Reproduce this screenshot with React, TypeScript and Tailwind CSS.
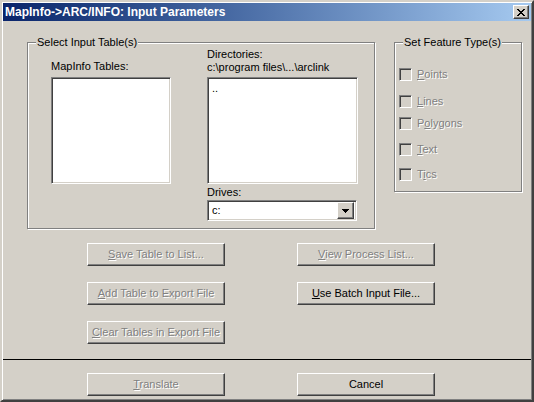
import React from "react";

const raised =
  "border border-t-white border-l-white border-r-[#404040] border-b-[#404040] [box-shadow:inset_-1px_-1px_0_#808080]";
const sunken =
  "border border-t-[#808080] border-l-[#808080] border-r-white border-b-white [box-shadow:inset_1px_1px_0_#404040,inset_-1px_-1px_0_#d4d0c8]";
const disabledText = "text-[#808080] [text-shadow:1px_1px_0_#fff]";

function Mnemonic({ label, index }: { label: string; index?: number }) {
  if (index === undefined) return <span>{label}</span>;
  return (
    <span>
      {label.slice(0, index)}
      <u>{label.charAt(index)}</u>
      {label.slice(index + 1)}
    </span>
  );
}

function WinButton({ label, mnemonic, disabled }: { label: string; mnemonic?: number; disabled?: boolean }) {
  return (
    <div
      className={`w-[138px] h-[23px] flex items-center justify-center bg-[#d4d0c8] ${raised} ${
        disabled ? disabledText : "text-black"
      }`}
    >
      <Mnemonic label={label} index={mnemonic} />
    </div>
  );
}

function CheckRow({ label, mnemonic, mt }: { label: string; mnemonic: number; mt: string }) {
  return (
    <div className={`flex items-center h-[13px] ${mt}`}>
      <div className={`w-[13px] h-[13px] bg-[#d4d0c8] ${sunken}`} />
      <span className={`ml-[5px] leading-[13px] ${disabledText}`}>
        <Mnemonic label={label} index={mnemonic} />
      </span>
    </div>
  );
}

function GroupBox({ title, className, children }: { title: string; className: string; children?: React.ReactNode }) {
  return (
    <div className={`relative border border-[#808080] [box-shadow:inset_1px_1px_0_#fff,1px_1px_0_#fff] ${className}`}>
      <span className="absolute top-[-7px] left-[8px] px-[1px] bg-[#d4d0c8] leading-[13px] whitespace-nowrap">
        {title}
      </span>
      {children}
    </div>
  );
}

export default function App() {
  return (
    <div
      className="w-[534px] h-[402px] overflow-hidden bg-[#d4d0c8] border-2 border-t-[#d4d0c8] border-l-[#d4d0c8] border-r-[#404040] border-b-[#404040] [box-shadow:inset_1px_1px_0_#fff,inset_-1px_-1px_0_#808080] p-[1px] text-[11px] text-black select-none"
      style={{ fontFamily: '"Liberation Sans", Arial, sans-serif' }}
    >
      {/* caption */}
      <div className="h-[18px] flex items-center justify-between bg-gradient-to-r from-[#0a246a] to-[#a6caf0]">
        <span className="pl-[2px] text-white font-bold text-[12px] leading-[18px] whitespace-nowrap">
          MapInfo-&gt;ARC/INFO: Input Parameters
        </span>
        <div className={`mr-[2px] w-[16px] h-[14px] flex items-center justify-center bg-[#d4d0c8] ${raised}`}>
          <svg width="8" height="7" viewBox="0 0 8 7" shapeRendering="crispEdges">
            <path
              d="M0 0h2v1h-2zM6 0h2v1h-2zM1 1h2v1h-2zM5 1h2v1h-2zM2 2h4v1h-4zM3 3h2v1h-2zM2 4h4v1h-4zM1 5h2v1h-2zM5 5h2v1h-2zM0 6h2v1h-2zM6 6h2v1h-2z"
              fill="#000"
            />
          </svg>
        </div>
      </div>

      {/* group boxes */}
      <div className="flex items-start pl-[24px] pt-[21px]">
        <GroupBox title="Select Input Table(s)" className="w-[348px] h-[187px]">
          <div className="flex items-start pl-[23px]">
            <div className="flex flex-col mt-[17px]">
              <span className="leading-[13px] whitespace-nowrap">MapInfo Tables:</span>
              <div className={`mt-[4px] w-[120px] h-[107px] bg-white ${sunken}`} />
            </div>
            <div className="flex flex-col ml-[36px] mt-[5px]">
              <span className="leading-[13px]">Directories:</span>
              <span className="leading-[13px] whitespace-nowrap">{"c:\\program files\\...\\arclink"}</span>
              <div className={`mt-[3px] w-[151px] h-[107px] bg-white ${sunken} pl-[4px] pt-[2px]`}>
                <span className="leading-[13px]">..</span>
              </div>
              <span className="mt-[2px] leading-[13px]">Drives:</span>
              <div className={`mt-[1px] w-[150px] h-[21px] bg-white ${sunken} flex items-center justify-between p-[2px]`}>
                <span className="pl-[2px] leading-[13px]">c:</span>
                <div className={`w-[17px] h-[17px] flex items-center justify-center bg-[#d4d0c8] ${raised}`}>
                  <svg width="7" height="4" viewBox="0 0 7 4" shapeRendering="crispEdges">
                    <path d="M0 0h7v1h-7zM1 1h5v1h-5zM2 2h3v1h-3zM3 3h1v1h-1z" fill="#000" />
                  </svg>
                </div>
              </div>
            </div>
          </div>
        </GroupBox>

        <GroupBox title="Set Feature Type(s)" className="ml-[19px] w-[128px] h-[150px]">
          <div className="flex flex-col pl-[4px] pt-[25px]">
            <CheckRow label="Points" mnemonic={0} mt="mt-0" />
            <CheckRow label="Lines" mnemonic={0} mt="mt-[14px]" />
            <CheckRow label="Polygons" mnemonic={1} mt="mt-[9px]" />
            <CheckRow label="Text" mnemonic={0} mt="mt-[13px]" />
            <CheckRow label="Tics" mnemonic={1} mt="mt-[12px]" />
          </div>
        </GroupBox>
      </div>

      {/* action buttons */}
      <div className="flex items-start pl-[84px] mt-[14px]">
        <div className="flex flex-col gap-[16px]">
          <WinButton label="Save Table to List..." mnemonic={0} disabled />
          <WinButton label="Add Table to Export File" mnemonic={0} disabled />
          <WinButton label="Clear Tables in Export File" mnemonic={0} disabled />
        </div>
        <div className="flex flex-col gap-[16px] ml-[72px]">
          <WinButton label="View Process List..." mnemonic={0} disabled />
          <WinButton label="Use Batch Input File..." mnemonic={0} />
        </div>
      </div>

      {/* separator */}
      <div className="mt-[15px] h-[1px] bg-[#000]" />

      <div className="flex items-start pl-[84px] mt-[13px]">
        <WinButton label="Translate" mnemonic={0} disabled />
        <div className="ml-[72px]">
          <WinButton label="Cancel" />
        </div>
      </div>
    </div>
  );
}
